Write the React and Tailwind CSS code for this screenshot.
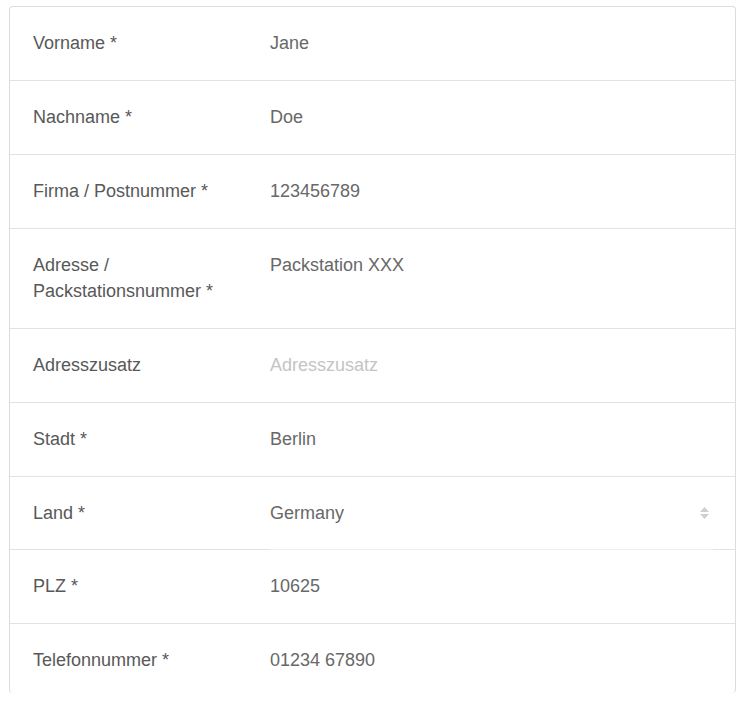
import React from 'react';

const rows = [
  { label: 'Vorname *', value: 'Jane' },
  { label: 'Nachname *', value: 'Doe' },
  { label: 'Firma / Postnummer *', value: '123456789' },
  { label: 'Adresse / Packstationsnummer *', value: 'Packstation XXX' },
  { label: 'Adresszusatz', value: 'Adresszusatz', placeholder: true },
  { label: 'Stadt *', value: 'Berlin' },
  { label: 'Land *', value: 'Germany', select: true },
  { label: 'PLZ *', value: '10625' },
  { label: 'Telefonnummer *', value: '01234 67890', last: true },
];

const SelectArrows = () => (
  <svg width="11" height="18" viewBox="0 0 11 18" className="shrink-0">
    <path d="M5.5 3 L10 8 L1 8 Z" fill="#cfcfcf" />
    <path d="M5.5 15 L10 10 L1 10 Z" fill="#cfcfcf" />
  </svg>
);

const rowPadding = (row) => {
  if (row.last) return 'pt-[23px] h-[69px]';
  if (row.select) return 'pt-[23px] pb-[23px]';
  return 'pt-[23px] pb-[24px] border-b border-[#e2e2e2]';
};

const App = () => {
  return (
    <div className="w-[745px] h-[715px] bg-white pt-[6px] pl-[9px] font-['Liberation_Sans',Arial,sans-serif] text-[18px] leading-[26px]">
      <div className="w-[727px] border border-b-0 border-[#dcdcdc] rounded-[4px]">
        {rows.map((row) => (
          <div key={row.label}>
            <div className={`flex items-start px-[23px] ${rowPadding(row)}`}>
              <div className="w-[237px] pr-[20px] shrink-0 text-[#585858]">{row.label}</div>
              <div className="flex-1 flex items-center justify-between pr-[2px]">
                <span className={row.placeholder ? 'text-[#c4c4c4]' : 'text-[#686868]'}>{row.value}</span>
                {row.select && <SelectArrows />}
              </div>
            </div>
            {row.select && (
              <div className="flex h-px">
                <div className="w-[260px] bg-[#e2e2e2]" />
                <div className="flex-1 bg-[#eeeeee]" />
                <div className="w-[22px] bg-[#e2e2e2]" />
              </div>
            )}
          </div>
        ))}
      </div>
    </div>
  );
};

export default App;
